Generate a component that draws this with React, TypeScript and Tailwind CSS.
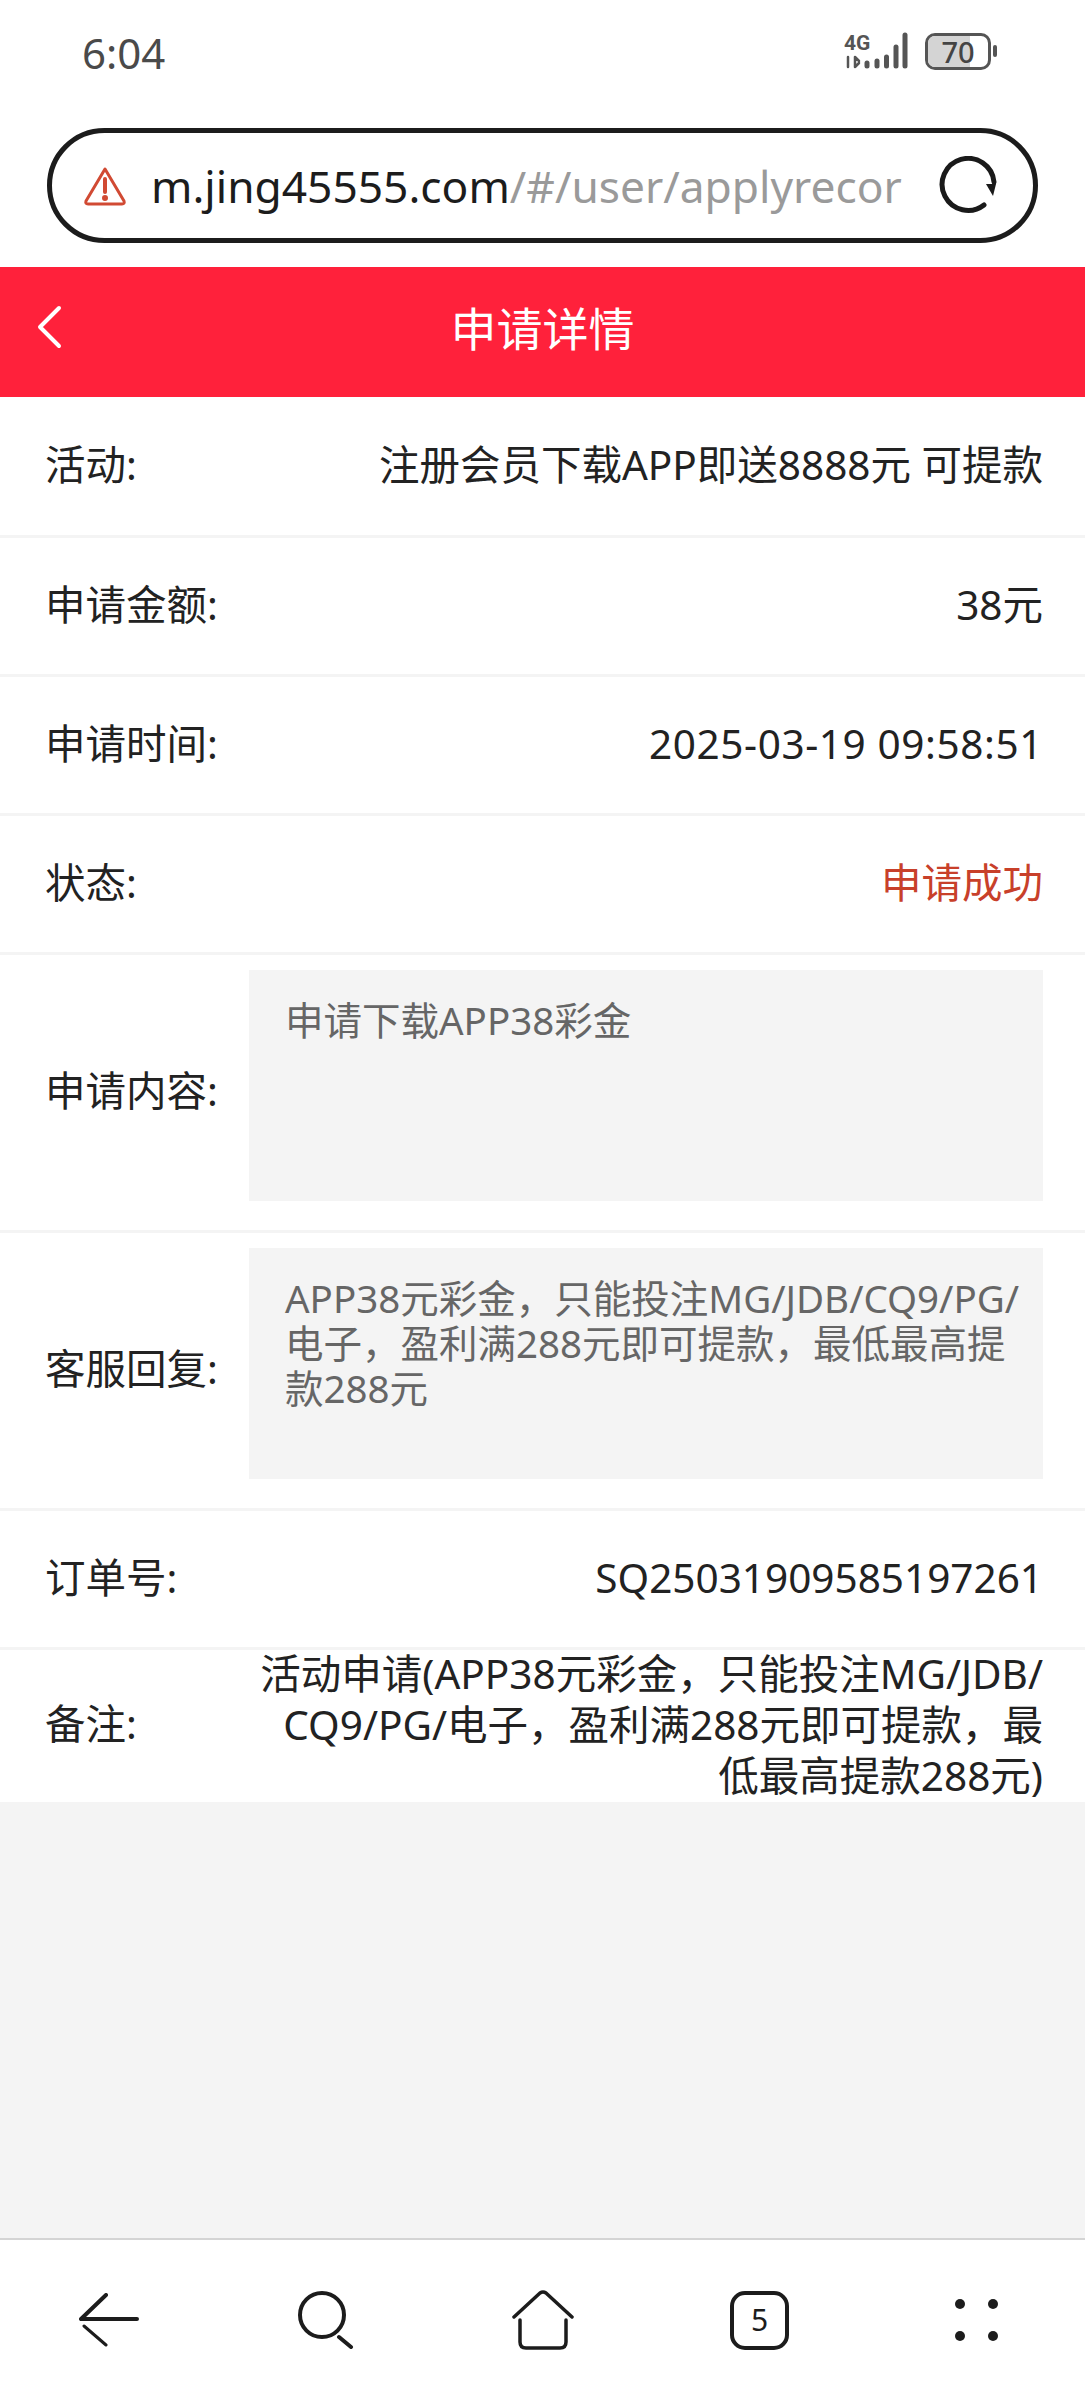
import React from 'react';

const fontStack = { fontFamily: '"Noto Sans", "Noto Sans CJK SC", sans-serif' };

const StatusIcons = () => (
  <div className="flex items-center">
    <svg width="66" height="38" viewBox="0 0 66 38" className="text-[#555]">
      <text x="0" y="18" fontSize="21" fontWeight="700" fill="currentColor" fontFamily="Roboto, sans-serif">4G</text>
      <g stroke="currentColor" strokeLinecap="round" fill="none">
        <path d="M4 25v10M11 25v10M11 25l4 4M11 35l4-4" strokeWidth="2.5" />
        <path d="M23 31v3" strokeWidth="5" />
        <path d="M33 29v5" strokeWidth="5" />
        <path d="M42.500 25v9" strokeWidth="5" />
        <path d="M52 15v19" strokeWidth="5" />
        <path d="M61 3v31" strokeWidth="5" />
      </g>
    </svg>
    <div className="relative ml-[15px] h-[37px] w-[66px] overflow-hidden rounded-[10px] border-[3px] border-[#555] bg-white">
      <div className="h-full w-[70%] bg-[#d4d4d4]" />
      <span className="absolute inset-0 flex items-center justify-center text-[29px] font-medium leading-none text-[#444]">70</span>
    </div>
    <div className="ml-[2px] h-[12px] w-[4px] rounded-full bg-[#555]" />
  </div>
);

const WarningIcon = () => (
  <svg width="44" height="40" viewBox="0 0 44 40" fill="none" stroke="#d14a33" strokeWidth="3" strokeLinejoin="round" strokeLinecap="round">
    <path d="M22 3 L41 35 Q42 38 39 38 L5 38 Q2 38 3 35 Z" />
    <path d="M22 13v13" strokeWidth="4" />
    <circle cx="22" cy="32" r="1.500" fill="#d14a33" />
  </svg>
);

const ReloadIcon = () => (
  <svg width="60" height="60" viewBox="0 0 60 60" fill="none">
    <path d="M45 49 A26 26 0 1 1 55 26" stroke="#1a1a1a" strokeWidth="5" strokeLinecap="round" />
    <path d="M47 28 L57 28 L54 40 Z" fill="#1a1a1a" />
  </svg>
);

const Row = ({ label, value, valueClass = 'text-[#222]', first = false }: { label: string; value: string; valueClass?: string; first?: boolean }) => (
  <div className={`flex ${first ? 'h-[141px]' : 'h-[139px]'} items-center justify-between border-b-[3px] border-[#f4f4f4] pb-[2px] pl-[45px] pr-[42px]`}>
    <span className="text-[#222]">{label}</span>
    <span className={valueClass}>{value}</span>
  </div>
);

const BoxRow = ({ label, text }: { label: string; text: string }) => (
  <div className="relative h-[278px] border-b-[3px] border-[#f4f4f4] pl-[249px] pr-[42px] pt-[15px]">
    <span className="absolute left-[45px] top-[106px] text-[#222]">{label}</span>
    <div className="h-[231px] bg-[#f4f4f4] pl-[36px] pr-[10px] pt-[28px] text-[38.5px] leading-[45px] text-[#666] break-all">
      {text}
    </div>
  </div>
);

export default function App() {
  return (
    <div className="flex h-[2400px] w-[1085px] flex-col overflow-hidden bg-white text-[40.5px]" style={fontStack}>
      {/* status bar */}
      <div className="flex h-[128px] items-start justify-between pl-[82px] pr-[88px] pt-[32px]">
        <span className="text-[42px] leading-[42px] text-[#4a4a4a]">6:04</span>
        <StatusIcons />
      </div>

      {/* address bar */}
      <div className="h-[139px] px-[47px]">
        <div className="flex h-[115px] items-center rounded-[58px] border-[5px] border-[#1c1c1c] pl-[31px] pr-[34px]">
          <WarningIcon />
          <div className="ml-[24px] flex-1 overflow-hidden whitespace-nowrap text-[44.3px] leading-[60px] text-[#1c1c1c]">
            m.jing45555.com<span className="text-[#9a9a9a]">/#/user/applyrecor</span>
          </div>
          <ReloadIcon />
        </div>
      </div>

      {/* red header */}
      <div className="relative flex h-[130px] items-center justify-center bg-[#ff213b] pb-[8px] text-[46px] text-white">
        <svg width="28" height="44" viewBox="0 0 28 44" fill="none" className="absolute left-[35px] top-[38px]">
          <path d="M24 3 L5 22 L24 41" stroke="white" strokeWidth="4" strokeLinecap="round" strokeLinejoin="round" />
        </svg>
        <span>申请详情</span>
      </div>

      <Row first label="活动:" value="注册会员下载APP即送8888元 可提款" />
      <Row label="申请金额:" value="38元" />
      <Row label="申请时间:" value="2025-03-19 09:58:51" valueClass="text-[#222] tracking-[0.6px]" />
      <Row label="状态:" value="申请成功" valueClass="text-[#c8402a]" />
      <BoxRow label="申请内容:" text="申请下载APP38彩金" />
      <BoxRow label="客服回复:" text="APP38元彩金，只能投注MG/JDB/CQ9/PG/电子，盈利满288元即可提款，最低最高提款288元" />
      <Row label="订单号:" value="SQ25031909585197261" />

      <div className="flex h-[152px] items-center justify-between pb-[3px] pl-[45px] pr-[42px]">
        <span className="shrink-0 text-[#222]">备注:</span>
        <div className="w-[795px] text-right leading-[51px] text-[#222] break-all">
          活动申请(APP38元彩金，只能投注MG/JDB/CQ9/PG/电子，盈利满288元即可提款，最低最高提款288元)
        </div>
      </div>

      <div className="flex-1 bg-[#f4f4f4]" />

      {/* browser toolbar */}
      <div className="grid h-[162px] grid-cols-5 items-center border-t-[2px] border-[#d4d4d4] bg-white text-[#1c1c1c]">
        <div className="flex justify-center">
          <svg width="60" height="54" viewBox="0 0 60 54" fill="none" stroke="currentColor" strokeLinecap="round" strokeLinejoin="round">
            <path d="M27 2 L2 26 H58" strokeWidth="4" />
            <path d="M5 33 L27 52" strokeWidth="3" />
          </svg>
        </div>
        <div className="flex justify-center">
          <svg width="56" height="58" viewBox="0 0 56 58" fill="none" stroke="currentColor" strokeLinecap="round">
            <circle cx="24" cy="24" r="22" strokeWidth="4" />
            <path d="M41 46 L53 56" strokeWidth="4" />
          </svg>
        </div>
        <div className="flex justify-center">
          <svg width="62" height="60" viewBox="0 0 62 60" fill="none" stroke="currentColor" strokeLinecap="round" strokeLinejoin="round">
            <path d="M2 27 L28 3 Q31 1 34 3 L60 27" strokeWidth="3.500" />
            <path d="M8 30 V52 Q8 58 14 58 H48 Q54 58 54 52 V30" strokeWidth="3.500" />
          </svg>
        </div>
        <div className="flex justify-center">
          <div className="flex h-[59px] w-[59px] items-center justify-center rounded-[15px] border-[4px] border-[#1c1c1c] text-[30px] leading-none">5</div>
        </div>
        <div className="flex justify-center">
          <div className="grid grid-cols-2 gap-x-[23px] gap-y-[22px]">
            <span className="h-[10px] w-[10px] rounded-full bg-[#1c1c1c]" />
            <span className="h-[10px] w-[10px] rounded-full bg-[#1c1c1c]" />
            <span className="h-[10px] w-[10px] rounded-full bg-[#1c1c1c]" />
            <span className="h-[10px] w-[10px] rounded-full bg-[#1c1c1c]" />
          </div>
        </div>
      </div>
    </div>
  );
}
